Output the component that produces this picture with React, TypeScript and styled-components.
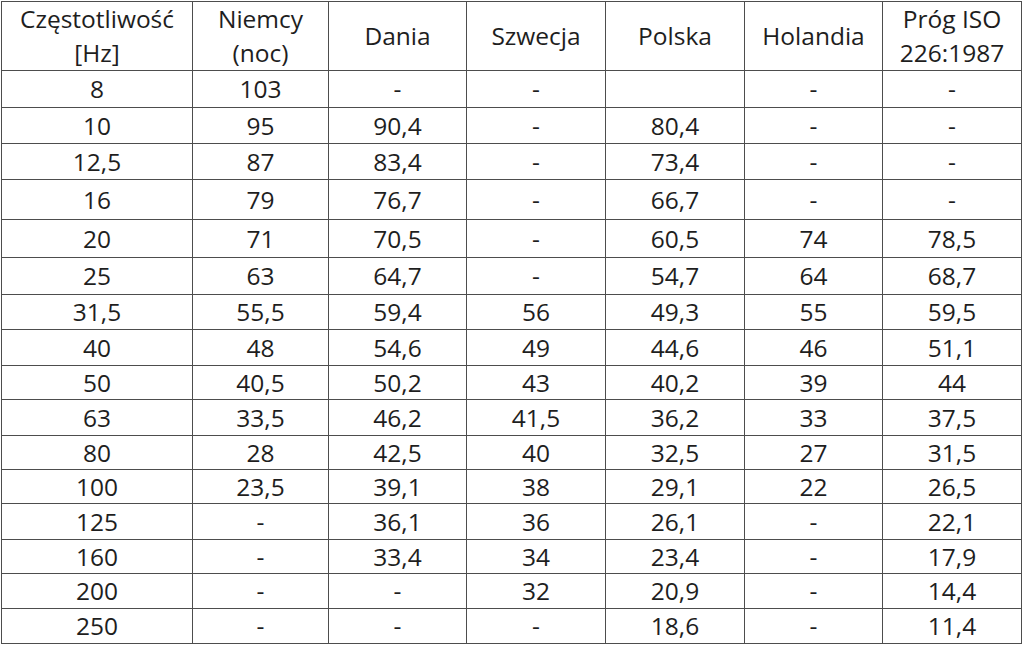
import React from 'react';
import styled, { createGlobalStyle } from 'styled-components';

const GlobalStyle = createGlobalStyle`
  html, body {
    margin: 0;
    padding: 0;
    background: #ffffff;
  }
  body {
    font-family: "Open Sans", "Liberation Sans", sans-serif;
    color: #1e1e1e;
  }
`;

const Page = styled.div`
  width: 1024px;
  height: 647px;
  padding: 1px 0 0 1px;
  box-sizing: border-box;
  background: #fff;
`;

const Table = styled.table`
  border-collapse: collapse;
  table-layout: fixed;
  width: 1020px;
  border: 1px solid #4d4d4d;
`;

const Col = styled.col<{ $w: number }>`
  width: ${(p) => p.$w}px;
`;

const HeadCell = styled.th`
  border: 1px solid #4d4d4d;
  font-weight: 400;
  font-size: 24.5px;
  line-height: 34px;
  height: 68px;
  padding: 0;
  text-align: center;
  vertical-align: middle;
  color: #1e1e1e;
`;

const Row = styled.tr<{ $h: number }>`
  height: ${(p) => p.$h}px;
`;

const Cell = styled.td`
  border: 1px solid #4d4d4d;
  font-size: 24.5px;
  line-height: 30px;
  padding: 0;
  text-align: center;
  vertical-align: middle;
  color: #1e1e1e;
`;

const widths = [191, 136, 138, 139, 139, 138, 139];

const headers: React.ReactNode[] = [
  <>Częstotliwość<br />[Hz]</>,
  <>Niemcy<br />(noc)</>,
  'Dania',
  'Szwecja',
  'Polska',
  'Holandia',
  <>Próg ISO<br />226:1987</>,
];

const rows: string[][] = [
  ['8', '103', '-', '-', '', '-', '-'],
  ['10', '95', '90,4', '-', '80,4', '-', '-'],
  ['12,5', '87', '83,4', '-', '73,4', '-', '-'],
  ['16', '79', '76,7', '-', '66,7', '-', '-'],
  ['20', '71', '70,5', '-', '60,5', '74', '78,5'],
  ['25', '63', '64,7', '-', '54,7', '64', '68,7'],
  ['31,5', '55,5', '59,4', '56', '49,3', '55', '59,5'],
  ['40', '48', '54,6', '49', '44,6', '46', '51,1'],
  ['50', '40,5', '50,2', '43', '40,2', '39', '44'],
  ['63', '33,5', '46,2', '41,5', '36,2', '33', '37,5'],
  ['80', '28', '42,5', '40', '32,5', '27', '31,5'],
  ['100', '23,5', '39,1', '38', '29,1', '22', '26,5'],
  ['125', '-', '36,1', '36', '26,1', '-', '22,1'],
  ['160', '-', '33,4', '34', '23,4', '-', '17,9'],
  ['200', '-', '-', '32', '20,9', '-', '14,4'],
  ['250', '-', '-', '-', '18,6', '-', '11,4'],
];

// row heights measured from the source table
const heights = [37, 36, 36, 40, 38, 37, 35, 36, 34, 36, 34, 34, 36, 34, 35, 35];

export default function App() {
  return (
    <Page>
      <GlobalStyle />
      <Table>
        <colgroup>
          {widths.map((w, i) => (
            <Col key={i} $w={w} />
          ))}
        </colgroup>
        <thead>
          <tr>
            {headers.map((h, i) => (
              <HeadCell key={i}>{h}</HeadCell>
            ))}
          </tr>
        </thead>
        <tbody>
          {rows.map((r, i) => (
            <Row key={i} $h={heights[i]}>
              {r.map((c, j) => (
                <Cell key={j}>{c}</Cell>
              ))}
            </Row>
          ))}
        </tbody>
      </Table>
    </Page>
  );
}
